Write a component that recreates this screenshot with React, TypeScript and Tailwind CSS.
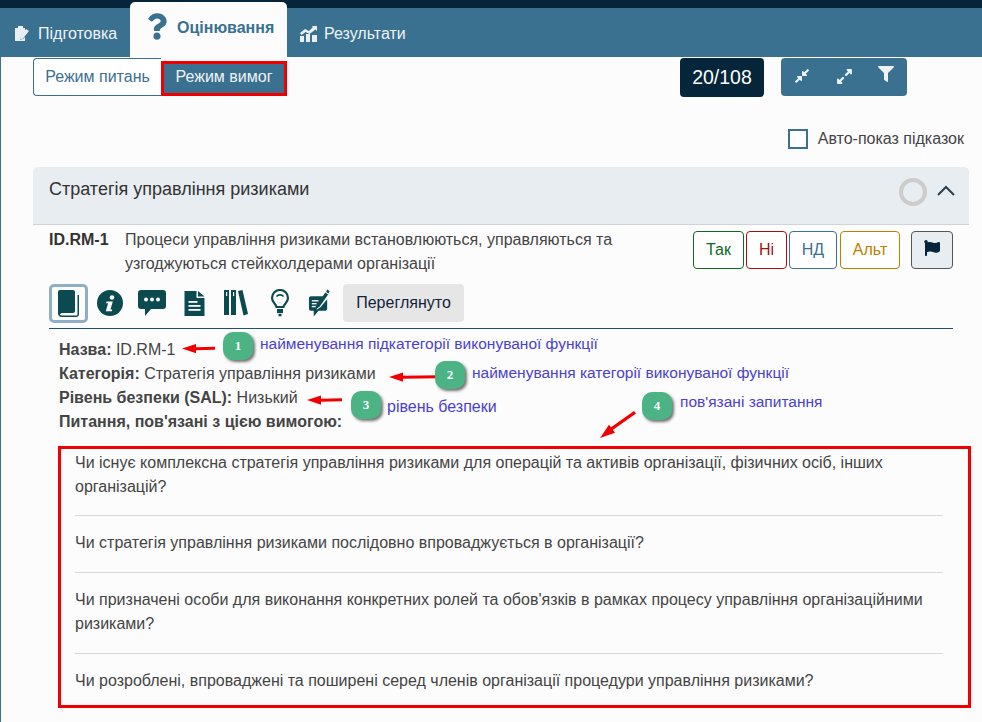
import React from "react";
import { FaCompressAlt, FaExpandAlt, FaFilter, FaFlag, FaQuestion } from "react-icons/fa";

const questions = [
  "Чи існує комплексна стратегія управління ризиками для операцій та активів організації, фізичних осіб, інших організацій?",
  "Чи стратегія управління ризиками послідовно впроваджується в організації?",
  "Чи призначені особи для виконання конкретних ролей та обов'язків в рамках процесу управління організаційними ризиками?",
  "Чи розроблені, впроваджені та поширені серед членів організації процедури управління ризиками?",
];

function Badge({ n, x, y }: { n: number; x: number; y: number }) {
  return (
    <div
      className="absolute flex h-[28px] w-[30px] items-center justify-center rounded-[10px] bg-[#4bb384] text-[13px] font-bold text-white shadow-[2px_2px_3px_rgba(0,0,0,0.55)]"
      style={{ left: x, top: y, fontFamily: '"Liberation Serif", serif' }}
    >
      {n}
    </div>
  );
}

function Note({ text, x, y, cls }: { text: string; x: number; y: number; cls?: string }) {
  return (
    <div className={"absolute whitespace-nowrap leading-[18px] text-[#4a3fd0] " + (cls ?? "text-[15.5px]")} style={{ left: x, top: y }}>
      {text}
    </div>
  );
}

// red arrows from the annotation layer, drawn over the whole page
function Arrows() {
  return (
    <svg className="absolute left-0 top-0" width="982" height="722" fill="#f00000" stroke="none">
      <path d="M182 348.500l14-4.500v3.200l19-.4v3l-19 .4v3z" />
      <path d="M389 377l14-4.500v3.200l35-.4v3l-35 .4v3z" />
      <path d="M307 400l14-4.500v3.200l21-.4v3l-21 .4v3z" />
      <path d="M600 438l15-5.200-6-8z" />
      <path d="M610 428l24-17 2 2.500-24 17z" />
    </svg>
  );
}

function ClipboardIcon() {
  return (
    <svg width="16" height="17" viewBox="0 0 16 17" fill="#e8eef2">
      <path d="M1 3h3V1h5v2h2v3l-4 5.500-1 3.500 3.500-1.500L11 12v4H1z" />
      <path d="M12 4l3 2-6 7.500-3 1 .5-3z" />
    </svg>
  );
}

function ChartIcon() {
  return (
    <svg width="17" height="16" viewBox="0 0 17 16" fill="#e8eef2">
      <rect x="0" y="10" width="4" height="6" />
      <rect x="6" y="8" width="4" height="8" />
      <rect x="12" y="9" width="5" height="7" />
      <path d="M0 7l5-4 4 2 4-4-1.500-1H17v5l-1.500-1.500L9.500 8l-4-2-4 3z" />
    </svg>
  );
}

function BookIcon() {
  return (
    <svg width="24" height="28" viewBox="0 0 24 28" fill="#0b4a50">
      <path d="M1 2a2 2 0 0 1 2-2h13a2 2 0 0 1 2 2v19c0 1-1 2-2 2H5a2 2 0 0 0-1.500 1H1z" />
      <path d="M1 23c0 3 2 4 4 4h14a3 3 0 0 0 3-3V5h-1.500v19c0 1-.5 1.500-1.500 1.500H5c-1.500 0-2.500-1-2.500-2.500z" />
    </svg>
  );
}

function InfoIcon() {
  return (
    <svg width="26" height="26" viewBox="0 0 26 26">
      <circle cx="13" cy="13" r="13" fill="#0b4a50" />
      <circle cx="15" cy="7.500" r="2.300" fill="#fcfcfc" />
      <path fill="#fcfcfc" d="M9.500 11.500h6.300l-2.300 8h1.800l-.5 1.800H8.800l2.300-8H9z" />
    </svg>
  );
}

function ChatIcon() {
  return (
    <svg width="28" height="26" viewBox="0 0 28 26" fill="#0b4a50">
      <path d="M3 0h22a3 3 0 0 1 3 3v13a3 3 0 0 1-3 3H13l-6 7v-7H3a3 3 0 0 1-3-3V3a3 3 0 0 1 3-3z" />
      <circle cx="8" cy="9.500" r="2" fill="#fcfcfc" />
      <circle cx="14" cy="9.500" r="2" fill="#fcfcfc" />
      <circle cx="20" cy="9.500" r="2" fill="#fcfcfc" />
    </svg>
  );
}

function FileIcon() {
  return (
    <svg width="21" height="25" viewBox="0 0 20 25" fill="#0b4a50">
      <path d="M0 0h12v7h8v18H0z" />
      <path d="M13.500 0L20 5.500h-6.500z" />
      <rect x="4" y="10" width="9" height="1.800" fill="#fcfcfc" />
      <rect x="4" y="14" width="12" height="1.800" fill="#fcfcfc" />
      <rect x="4" y="18" width="12" height="1.800" fill="#fcfcfc" />
    </svg>
  );
}

function BooksIcon() {
  return (
    <svg width="24" height="26" viewBox="0 0 24 26" fill="#0b4a50">
      <rect x="0" y="0" width="5" height="25" />
      <rect x="7" y="0" width="5" height="25" />
      <path d="M14 1l4.500-1 5.500 24-4.500 1.500z" />
      <rect x="2" y="2" width="1.200" height="4" fill="#fcfcfc" />
      <rect x="9" y="2" width="1.200" height="4" fill="#fcfcfc" />
    </svg>
  );
}

function BulbIcon() {
  return (
    <svg width="20" height="28" viewBox="0 0 20 28" fill="none" stroke="#0b4a50">
      <path strokeWidth="2.200" d="M6.500 18c0-3-4.500-4-4.500-9a8 8 0 0 1 16 0c0 5-4.500 6-4.500 9z" />
      <path strokeWidth="1.800" d="M6.500 7.500a4.500 4.500 0 0 1 7 0" />
      <path strokeWidth="4" d="M7 22h6" />
      <path strokeWidth="2.500" d="M8.500 26h3" />
    </svg>
  );
}

function NotePenIcon() {
  return (
    <svg width="23" height="29" viewBox="0 0 24 29" fill="#0b4a50">
      <path d="M3 7h13l-6 10-1 4 4-2.500L20 10v10a2 2 0 0 1-2 2H11l-5 6v-6H3a2 2 0 0 1-2-2V9a2 2 0 0 1 2-2z" />
      <path d="M18 3l3 2-9 13-3 2 .5-4z" />
      <path d="M20 0l2.500 1.500-1 2.500-2.500-1.500z" />
      <rect x="4" y="11" width="7" height="1.400" fill="#fcfcfc" />
      <rect x="4" y="14" width="5" height="1.400" fill="#fcfcfc" />
      <rect x="4" y="17" width="4" height="1.400" fill="#fcfcfc" />
    </svg>
  );
}

function Answer({ label, cls }: { label: string; cls: string }) {
  return (
    <button className={"flex h-[38px] items-center justify-center rounded border bg-white text-[16px] " + cls}>{label}</button>
  );
}

export default function App() {
  return (
    <div className="relative h-[722px] w-[982px] overflow-hidden bg-[#fcfcfc] text-[#444]" style={{ fontFamily: '"Liberation Sans", Arial, sans-serif' }}>
      <div className="h-2 bg-[#05263a]" />

      {/* tabs */}
      <div className="flex h-[49px] bg-[#3a7090] pl-[14px]">
        <div className="flex h-[49px] w-[116px] items-center gap-[8px] pt-[2px] text-[16px] text-[#f0f4f7]">
          <ClipboardIcon />
          <span>Підготовка</span>
        </div>
        <div className="relative -mt-[6px] flex h-[55px] w-[157px] items-center rounded-t-[5px] bg-[#fcfcfc] pl-[17px] text-[16px] font-bold text-[#3a7090]">
          <FaQuestion className="-mt-[7px] mr-[10px] w-[20px] text-[27px]" />
          <span className="-mt-[3px]">Оцінювання</span>
        </div>
        <div className="flex h-[49px] items-center gap-[7px] pl-[13px] pt-[2px] text-[16px] text-[#f0f4f7]">
          <ChartIcon />
          <span>Результати</span>
        </div>
      </div>

      <div className="absolute bottom-0 left-0 top-[57px] w-px bg-[#3a7090]" />

      <div className="pl-[33px] pr-[13px]">
        {/* toolbar */}
        <div className="flex h-[40px] items-start">
          <div className="mt-[1px] flex h-[38px]">
            <div className="flex w-[128px] items-center justify-center rounded-l border border-r-0 border-[#3a7090] bg-white text-[16px] text-[#3a7090]">
              Режим питань
            </div>
            <div className="mt-[3px] flex h-[35px] w-[126px] items-center justify-center border-[3px] border-[#f00000] bg-[#3a7090] pb-[3px] text-[16px] text-[#f0f4f7]">
              Режим вимог
            </div>
          </div>
          <div className="ml-[393px] mt-[1px] flex h-[39px] w-[84px] items-center justify-center rounded bg-[#05263a] text-[19.5px] text-white">20/108</div>
          <div className="ml-[17px] mt-[1px] flex h-[38px] w-[126px] items-start rounded bg-[#3a7090] text-[#eef2f5]">
            <FaCompressAlt className="ml-[13px] mt-[10px] text-[16px]" />
            <FaExpandAlt className="ml-[26px] mt-[10px] text-[17px]" />
            <FaFilter className="ml-[25px] mt-[8px] text-[16px]" />
          </div>
        </div>

        <div className="mt-[32px] flex h-[20px] items-center justify-end pr-[5px] text-[16px]">
          <div className="mr-[10px] h-[20px] w-[20px] border-[2px] border-[#3a7090] bg-white" />
          Авто-показ підказок
        </div>

        {/* accordion */}
        <div className="mt-[18px] flex h-[58px] items-start justify-between rounded-t-[5px] border-b border-[#cfd3d5] bg-[#e7edf1] pl-[16px] pr-[14px]">
          <span className="mt-[10px] text-[18px] leading-[24px] text-[#333]">Стратегія управління ризиками</span>
          <div className="flex items-start">
            <div className="mt-[11px] h-[28px] w-[28px] rounded-full border-[4px] border-[#cccccc]" />
            <svg className="ml-[10px] mt-[18px]" width="18" height="12" viewBox="0 0 18 12" fill="none" stroke="#2c3e50" strokeWidth="2">
              <path d="M1 10l8-8 8 8" />
            </svg>
          </div>
        </div>

        {/* requirement row */}
        <div className="flex items-start px-[16px] pt-[3px]">
          <span className="w-[76px] text-[16px] font-bold leading-[24px] text-[#333]">ID.RM-1</span>
          <p className="w-[500px] text-[16px] leading-[24px]">
            Процеси управління ризиками встановлюються, управляються та узгоджуються стейкхолдерами організації
          </p>
          <div className="ml-auto mt-[3px] flex gap-[2px]">
            <Answer label="Так" cls="w-[51px] border-[#0f6b1e] text-[#0f6b1e]" />
            <Answer label="Ні" cls="w-[41px] border-[#a51010] text-[#a51010]" />
            <Answer label="НД" cls="w-[48px] border-[#3a7090] text-[#3a7090]" />
            <Answer label="Альт" cls="ml-[1px] w-[60px] border-[#bb8000] text-[#bb8000]" />
            <button className="ml-[9px] flex h-[38px] w-[42px] items-start justify-center rounded border border-[#555] bg-[#e7edf1] pt-[8px] text-[#05263a]">
              <FaFlag className="text-[16px]" />
            </button>
          </div>
        </div>

        {/* icon bar */}
        <div className="mx-[16px] mt-[8px] flex h-[45px] items-start border-b border-[#1e5070]">
          <div className="flex h-[39px] w-[39px] items-center justify-center rounded-[5px] border-[3px] border-[#8fb0c4]">
            <BookIcon />
          </div>
          <div className="flex h-[38px] items-center">
            <div className="ml-[9px]"><InfoIcon /></div>
            <div className="ml-[15px]"><ChatIcon /></div>
            <div className="ml-[18px]"><FileIcon /></div>
            <div className="ml-[19px]"><BooksIcon /></div>
            <div className="ml-[22px]"><BulbIcon /></div>
            <div className="ml-[18px]"><NotePenIcon /></div>
          </div>
          <div className="ml-[12px] flex h-[38px] w-[121px] items-center justify-center rounded bg-[#e6e6e6] text-[16px] text-[#12233a]">Переглянуто</div>
        </div>

        {/* details */}
        <div className="pl-[26px] pt-[9px] text-[16px] leading-[24px]">
          <div><b>Назва:</b> ID.RM-1</div>
          <div><b>Категорія:</b> Стратегія управління ризиками</div>
          <div><b>Рівень безпеки (SAL):</b> Низький</div>
          <div><b>Питання, пов'язані з цією вимогою:</b></div>
        </div>

        {/* questions */}
        <div className="ml-[25px] mt-[12px] h-[262px] w-[913px] border-[3px] border-[#f00000] pl-[14px] pr-[25px] pt-[2px]">
          {questions.map((q, i) => (
            <div
              key={i}
              className={
                "text-[16px] leading-[24px] " +
                (i === 0 ? "pb-[16px] " : "pb-[17px] pt-[15px] ") +
                (i < questions.length - 1 ? "border-b border-[#d8d8d8]" : "")
              }
            >
              {q}
            </div>
          ))}
        </div>
      </div>

      {/* annotation layer */}
      <Arrows />
      <Badge n={1} x={223} y={332} />
      <Note text="найменування підкатегорії виконуваної функції" x={260} y={335} />
      <Badge n={2} x={435} y={361} />
      <Note text="найменування категорії виконуваної функції" x={472} y={364} />
      <Badge n={3} x={351} y={391} />
      <Note text="рівень безпеки" x={387} y={398} cls="text-[16px]" />
      <Badge n={4} x={642} y={392} />
      <Note text="пов'язані запитання" x={680} y={393} />
    </div>
  );
}
